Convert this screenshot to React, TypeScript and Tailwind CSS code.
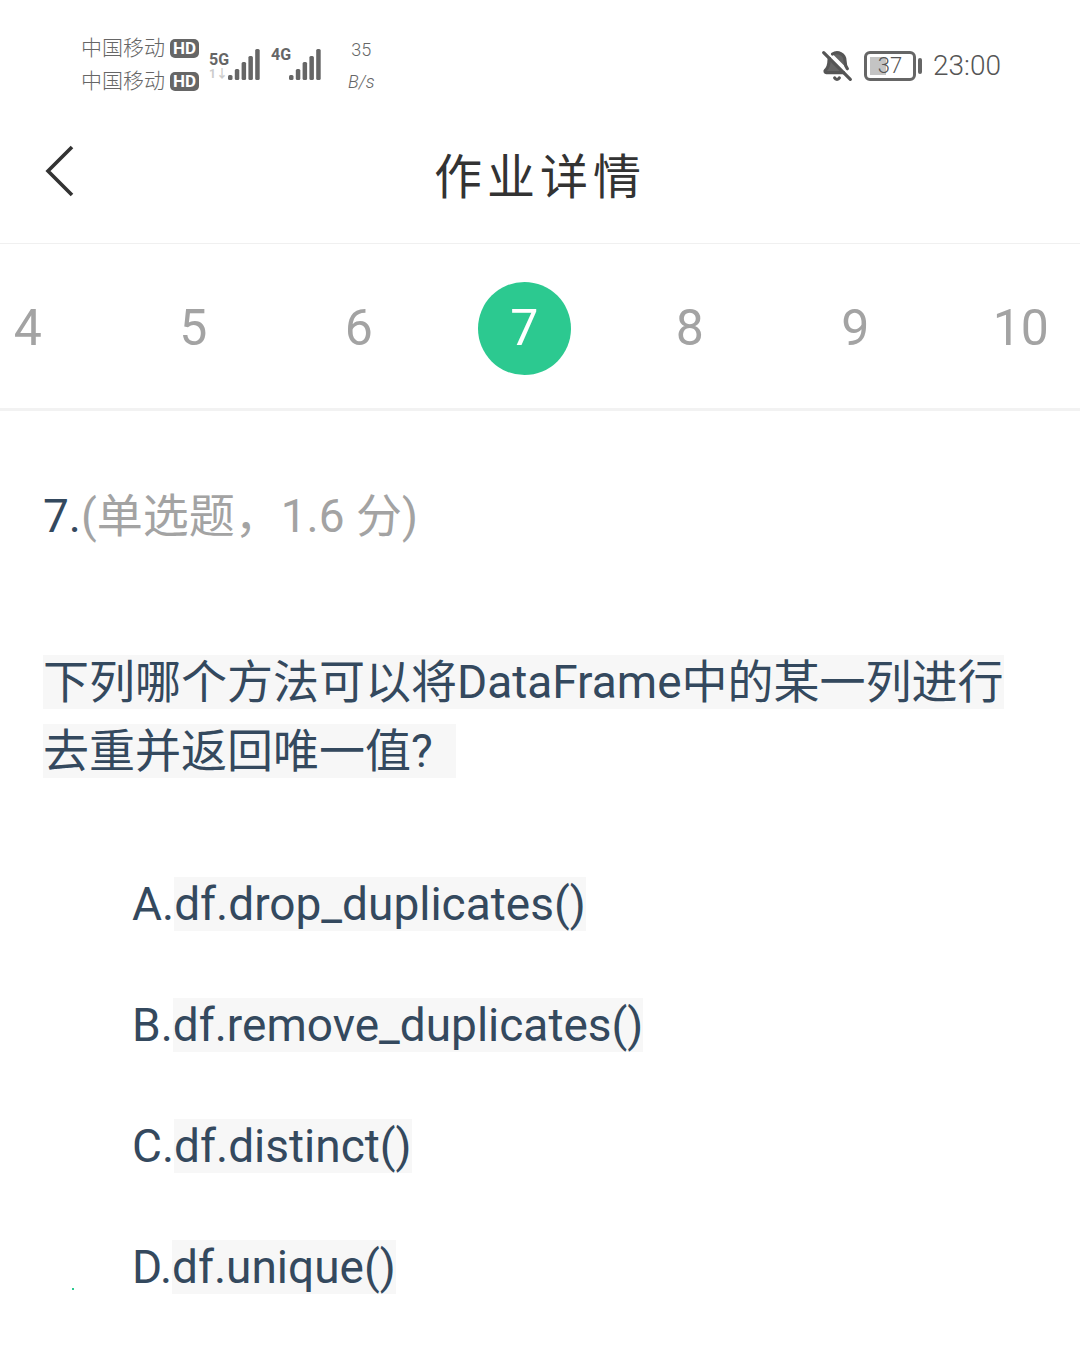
import { BellOff } from 'lucide-react';

const FONT = 'font-[Roboto,"Noto_Sans_CJK_SC",sans-serif]';

const pages = [4, 5, 6, 7, 8, 9, 10];

const options = [
  { label: 'A.', code: 'df.drop_duplicates()' },
  { label: 'B.', code: 'df.remove_duplicates()' },
  { label: 'C.', code: 'df.distinct()' },
  { label: 'D.', code: 'df.unique()' },
];

// Signal bars, the heights grow from left to right
const Signal = ({ heights }: { heights: number[] }) => (
  <svg width="33" height="32" viewBox="0 0 33 32" className="fill-[#666]">
    {heights.map((h, i) => (
      <rect key={i} x={i * 6.8} y={32 - h} width="4.5" height={h} rx="1.5" />
    ))}
  </svg>
);

const Carrier = () => (
  <div className="flex items-center gap-[5px] h-[33px]">
    <span className="text-[21px] font-light text-[#666] leading-none">中国移动</span>
    <span className="bg-[#666] text-white rounded-[5px] text-[17px] font-bold leading-none px-[3px] py-[1px]">HD</span>
  </div>
);

export default function App() {
  return (
    <div className={`${FONT} w-[1080px] h-[1355px] bg-white overflow-hidden relative`}>
      {/* Status bar */}
      <div className="h-[130px] flex items-start justify-between pl-[81px] pr-[79px] pt-[32px]">
        <div className="flex items-start">
          <div className="flex flex-col">
            <Carrier />
            <Carrier />
          </div>
          <div className="flex items-end ml-[10px] mt-[15px] h-[33px]">
            <div className="flex flex-col w-[19px] leading-none">
              <span className="text-[16px] font-bold text-[#666]">5G</span>
              <span className="text-[12px] font-bold text-[#ccc]">1↓</span>
            </div>
            <Signal heights={[5, 11, 18, 24, 31]} />
            <span className="text-[16px] font-bold text-[#666] ml-[10px] w-[18px] self-start leading-none">4G</span>
            <Signal heights={[5, 11, 18, 24, 31]} />
          </div>
          <div className="flex flex-col items-center ml-[26px] mt-[2px] text-[#666] text-[18px] font-light leading-[32px]">
            <span>35</span>
            <span className="italic">B/s</span>
          </div>
        </div>
        <div className="flex items-center mt-[18px] text-[#555]">
          <BellOff size={32} fill="#666" strokeWidth={2.4} />
          <div className="ml-[11px] w-[52px] h-[30px] border-[3px] border-[#666] rounded-[6px] relative flex items-center justify-center text-[22px] font-light leading-none">
            <div className="absolute left-[3px] top-[3px] bottom-[3px] w-[16px] bg-[#c4c4c4]" />
            <span className="relative">37</span>
          </div>
          <div className="ml-[2px] w-[4px] h-[16px] bg-[#666] rounded-[2px]" />
          <span className="ml-[11px] text-[28px] font-light leading-none w-[68px]">23:00</span>
        </div>
      </div>

      {/* Title */}
      <div className="h-[114px] border-b-[1px] border-[#f0f0f0] relative flex items-center justify-center">
        <svg width="30" height="52" viewBox="0 0 30 52" fill="none" className="absolute left-[45px] top-[15px] stroke-[#333]">
          <path d="M27 2 L3 26 L27 50" strokeWidth="3.6" />
        </svg>
        <span className="text-[48px] text-[#333] tracking-[5px] leading-none mb-[18px]">作业详情</span>
      </div>

      {/* Question numbers */}
      <div className="h-[167px] border-b-[3px] border-[#f2f2f2] flex items-center -ml-[55px] pt-[4px]">
        {pages.map((p) => (
          <div key={p} className="w-[165.5px] shrink-0 flex justify-center">
            <span
              className={`w-[93px] h-[93px] rounded-full flex items-center justify-center text-[50px] ${
                p === 7 ? 'bg-[#2cc990] text-white' : 'text-[#a3a3a3]'
              }`}
            >
              {p}
            </span>
          </div>
        ))}
      </div>

      {/* Question */}
      <div className="pl-[43px] pt-[71px] text-[46px] leading-[69px] text-[#34495e]">
        <div>
          7.<span className="text-[#a3a3a3]">(单选题，1.6 分)</span>
        </div>
        <p className="mt-[97px] w-[970px]">
          <span className="bg-[#f7f7f7]">下列哪个方法可以将DataFrame中的某一列进行去重并返回唯一值?&nbsp;&nbsp;</span>
        </p>
        <ul className="mt-[84px] pl-[89px] flex flex-col gap-[52px]">
          {options.map((o) => (
            <li key={o.label}>
              {o.label}
              <span className="bg-[#f7f7f7]">{o.code}</span>
            </li>
          ))}
        </ul>
      </div>
      <div className="absolute left-[72px] top-[1288px] w-[2px] h-[2px] bg-[#2cc990]" />
    </div>
  );
}
